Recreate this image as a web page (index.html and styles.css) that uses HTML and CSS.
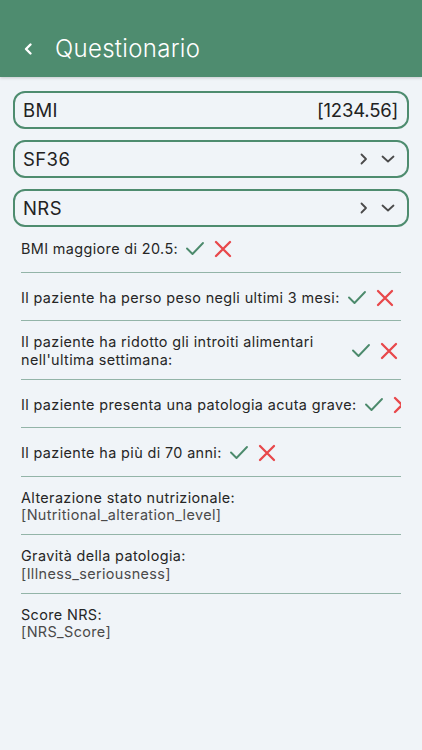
FILE: index.html
```html
<!DOCTYPE html>
<html lang="it">
<head>
<meta charset="utf-8">
<title>Questionario</title>
<link rel="stylesheet" href="styles.css">
</head>
<body>
<header class="appbar">
  <svg class="back" width="12" height="14" viewBox="0 0 12 14"><path d="M8.5 2.5 L4 7 L8.5 11.5" fill="none" stroke="#fff" stroke-width="2.4" stroke-linecap="round" stroke-linejoin="round"/></svg>
  <h1 class="title">Questionario</h1>
</header>
<main class="content">
  <section class="cards">
    <div class="card">
      <span class="card-label">BMI</span>
      <span class="card-value">[1234.56]</span>
    </div>
    <div class="card">
      <span class="card-label">SF36</span>
      <span class="card-actions">
        <svg width="14" height="14" viewBox="0 0 14 14"><path d="M4.5 2.5 L9 7 L4.5 11.5" fill="none" stroke="#4a4a4a" stroke-width="1.8" stroke-linecap="round" stroke-linejoin="round"/></svg>
        <svg width="16" height="14" viewBox="0 0 16 14"><path d="M2.5 4.5 L8 9.5 L13.5 4.5" fill="none" stroke="#4a4a4a" stroke-width="1.8" stroke-linecap="round" stroke-linejoin="round"/></svg>
      </span>
    </div>
    <div class="card">
      <span class="card-label">NRS</span>
      <span class="card-actions">
        <svg width="14" height="14" viewBox="0 0 14 14"><path d="M4.5 2.5 L9 7 L4.5 11.5" fill="none" stroke="#4a4a4a" stroke-width="1.8" stroke-linecap="round" stroke-linejoin="round"/></svg>
        <svg width="16" height="14" viewBox="0 0 16 14"><path d="M2.5 4.5 L8 9.5 L13.5 4.5" fill="none" stroke="#4a4a4a" stroke-width="1.8" stroke-linecap="round" stroke-linejoin="round"/></svg>
      </span>
    </div>
  </section>

  <section class="list">
    <div class="row first">
      <span class="q">BMI maggiore di 20.5:</span>
      <span class="answers">
        <svg class="ico" viewBox="0 0 24 24"><path d="M4 11.5 L9.5 17 L20 6" fill="none" stroke="#4c8a6c" stroke-width="1.9" stroke-linecap="round" stroke-linejoin="round"/></svg>
        <svg class="ico" viewBox="0 0 24 24"><path d="M5 5 L19 19 M19 5 L5 19" fill="none" stroke="#e8484b" stroke-width="2.3" stroke-linecap="round"/></svg>
      </span>
    </div>
    <div class="row">
      <span class="q">Il paziente ha perso peso negli ultimi 3 mesi:</span>
      <span class="answers">
        <svg class="ico" viewBox="0 0 24 24"><path d="M4 11.5 L9.5 17 L20 6" fill="none" stroke="#4c8a6c" stroke-width="1.9" stroke-linecap="round" stroke-linejoin="round"/></svg>
        <svg class="ico" viewBox="0 0 24 24"><path d="M5 5 L19 19 M19 5 L5 19" fill="none" stroke="#e8484b" stroke-width="2.3" stroke-linecap="round"/></svg>
      </span>
    </div>
    <div class="row tall">
      <span class="q grow">Il paziente ha ridotto gli introiti alimentari<br>nell'ultima settimana:</span>
      <span class="answers">
        <svg class="ico" viewBox="0 0 24 24"><path d="M4 11.5 L9.5 17 L20 6" fill="none" stroke="#4c8a6c" stroke-width="1.9" stroke-linecap="round" stroke-linejoin="round"/></svg>
        <svg class="ico" viewBox="0 0 24 24"><path d="M5 5 L19 19 M19 5 L5 19" fill="none" stroke="#e8484b" stroke-width="2.3" stroke-linecap="round"/></svg>
      </span>
    </div>
    <div class="row">
      <span class="q">Il paziente presenta una patologia acuta grave:</span>
      <span class="answers">
        <svg class="ico" viewBox="0 0 24 24"><path d="M4 11.5 L9.5 17 L20 6" fill="none" stroke="#4c8a6c" stroke-width="1.9" stroke-linecap="round" stroke-linejoin="round"/></svg>
        <svg class="ico" viewBox="0 0 24 24"><path d="M5 5 L19 19 M19 5 L5 19" fill="none" stroke="#e8484b" stroke-width="2.3" stroke-linecap="round"/></svg>
      </span>
    </div>
    <div class="row">
      <span class="q">Il paziente ha più di 70 anni:</span>
      <span class="answers">
        <svg class="ico" viewBox="0 0 24 24"><path d="M4 11.5 L9.5 17 L20 6" fill="none" stroke="#4c8a6c" stroke-width="1.9" stroke-linecap="round" stroke-linejoin="round"/></svg>
        <svg class="ico" viewBox="0 0 24 24"><path d="M5 5 L19 19 M19 5 L5 19" fill="none" stroke="#e8484b" stroke-width="2.3" stroke-linecap="round"/></svg>
      </span>
    </div>
    <div class="row info">
      <span class="label">Alterazione stato nutrizionale:</span>
      <span class="value">[Nutritional_alteration_level]</span>
    </div>
    <div class="row info">
      <span class="label">Gravità della patologia:</span>
      <span class="value">[Illness_seriousness]</span>
    </div>
    <div class="row info last">
      <span class="label">Score NRS:</span>
      <span class="value">[NRS_Score]</span>
    </div>
  </section>
</main>
</body>
</html>
```

FILE: styles.css
```css
* { box-sizing: border-box; }

html, body {
  margin: 0;
  padding: 0;
  background: #f0f4f8;
  font-family: "Inter", "Noto Sans", sans-serif;
  color: #262626;
}

.appbar {
  height: 77px;
  background: #4e8c6f;
  display: flex;
  align-items: center;
  padding: 20px 0 0 22px;
  box-shadow: 0 1px 3px rgba(0, 0, 0, 0.18);
}

.back {
  display: block;
  margin-right: 21px;
}

.title {
  margin: 0;
  font-size: 24px;
  font-weight: 300;
  color: #ffffff;
  letter-spacing: 0.3px;
}

.content {
  padding: 14px 13px 0;
}

.cards {
  display: flex;
  flex-direction: column;
  gap: 11px;
}

.card {
  height: 38px;
  border: 2px solid #4e8c6f;
  border-radius: 12px;
  display: flex;
  align-items: center;
  justify-content: space-between;
  padding: 0 9px 0 8px;
  font-size: 18.5px;
  color: #222;
}

.card-label {
  letter-spacing: 0.4px;
}

.card-value {
  letter-spacing: -0.2px;
}

.card-actions {
  display: flex;
  align-items: center;
  gap: 9px;
  margin-right: 2px;
}

.card-actions svg {
  display: block;
}

.list {
  margin: 0 8px;
}

.row {
  display: flex;
  align-items: center;
  padding: 13px 0 10.5px;
  border-bottom: 1.5px solid #93b4a8;
  font-size: 14.4px;
  letter-spacing: 0.38px;
  line-height: 17.5px;
  overflow: hidden;
}

.row.first {
  padding-top: 10px;
}

.row.tall {
  padding-top: 12px;
}

.row.last {
  border-bottom: none;
}

.q {
  white-space: nowrap;
  flex-shrink: 0;
}

.q.grow {
  flex: 1;
}

.answers {
  display: flex;
  gap: 4px;
  margin-left: 5px;
  flex-shrink: 0;
  letter-spacing: 0;
}

.ico {
  width: 24px;
  height: 24px;
  display: block;
}

.info {
  flex-direction: column;
  align-items: flex-start;
  padding: 12px 0 10.5px;
}

.label {
  color: #262626;
}

.value {
  color: #4a4a4a;
}
```
